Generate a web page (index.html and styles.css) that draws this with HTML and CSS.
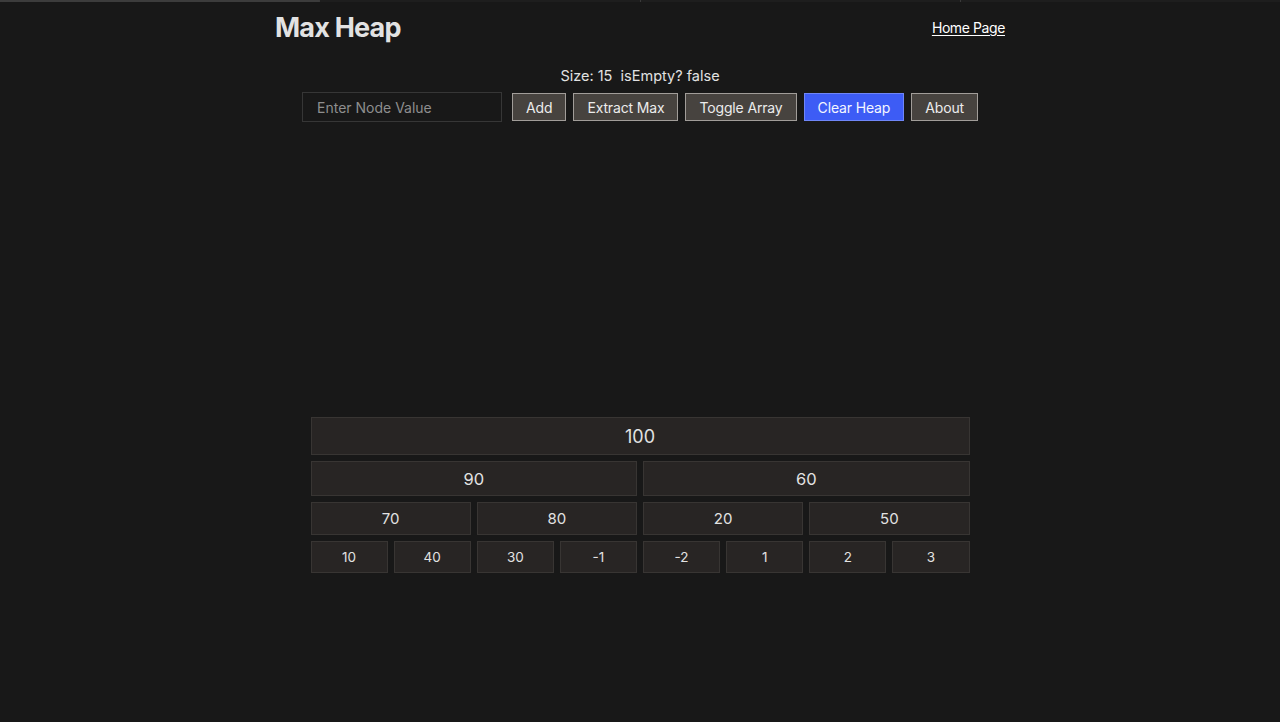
FILE: index.html
```html
<!DOCTYPE html>
<html lang="en">
<head>
<meta charset="utf-8">
<title>Max Heap</title>
<link rel="stylesheet" href="styles.css">
</head>
<body>
<div class="tabstrip">
  <span class="tab tab-active"></span><span class="tab"></span><span class="tab"></span><span class="tab"></span>
</div>
<header class="header">
  <h1 class="title">Max Heap</h1>
  <a class="home-link" href="#">Home Page</a>
</header>
<main class="main">
  <p class="status">Size: 15&nbsp; isEmpty? false</p>
  <div class="controls">
    <input class="node-input" type="text" placeholder="Enter Node Value">
    <button class="btn">Add</button>
    <button class="btn">Extract Max</button>
    <button class="btn">Toggle Array</button>
    <button class="btn btn-primary">Clear Heap</button>
    <button class="btn">About</button>
  </div>
  <div class="canvas"></div>
  <div class="heap">
    <div class="level level-0"><div class="node">100</div></div>
    <div class="level level-1"><div class="node">90</div><div class="node">60</div></div>
    <div class="level level-2"><div class="node">70</div><div class="node">80</div><div class="node">20</div><div class="node">50</div></div>
    <div class="level level-3"><div class="node">10</div><div class="node">40</div><div class="node">30</div><div class="node">-1</div><div class="node">-2</div><div class="node">1</div><div class="node">2</div><div class="node">3</div></div>
  </div>
</main>
</body>
</html>
```
FILE: styles.css
```css
* { box-sizing: border-box; }
html, body {
  margin: 0;
  padding: 0;
  background: #181818;
  color: #e2e2e2;
  font-family: Inter, "Noto Sans", "Liberation Sans", sans-serif;
  height: 100%;
}
.tabstrip {
  display: flex;
  height: 2px;
  background: #1e1e1e;
}
.tab {
  flex: 1;
  border-left: 1px solid #3a3a3a;
}
.tab:first-child { border-left: none; }
.tab-active { background: #3c3c3c; }

.header {
  width: 730px;
  margin: 0 auto;
  display: flex;
  justify-content: space-between;
  align-items: flex-start;
  padding-top: 10px;
  height: 54px;
}
.title {
  margin: 0;
  font-size: 27px;
  font-weight: 700;
  letter-spacing: -0.8px;
  color: #e2e2e2;
  line-height: 32px;
}
.home-link {
  margin-top: 7px;
  color: #ffffff;
  font-size: 14px;
  line-height: 17px;
  letter-spacing: -0.4px;
  text-decoration: underline;
  text-underline-offset: 2px;
}
.main {
  display: flex;
  flex-direction: column;
  align-items: center;
}
.status {
  margin: 11px 0 0;
  font-size: 14.5px;
  line-height: 18px;
  color: #e2e2e2;
}
.controls {
  display: flex;
  align-items: center;
  gap: 7px;
  margin-top: 7px;
}
.node-input {
  width: 200px;
  height: 30px;
  background: #181818;
  border: 1px solid #363636;
  color: #e2e2e2;
  font-family: inherit;
  font-size: 14px;
  padding: 0 14px;
  margin-right: 3px;
  outline: none;
}
.node-input::placeholder { color: #8e8e8e; }
.btn {
  height: 28px;
  padding: 0 13px;
  background: #47433f;
  border: 1px solid #a19d99;
  color: #ececec;
  font-family: inherit;
  font-size: 14px;
  letter-spacing: -0.15px;
  cursor: pointer;
}
.btn-primary {
  background: #3d5cf5;
  border-color: #6f86f7;
  color: #f4f6ff;
}
.canvas {
  height: 295px;
}
.heap {
  width: 659px;
  display: flex;
  flex-direction: column;
  gap: 6px;
}
.level {
  display: flex;
  gap: 6px;
}
.node {
  flex: 1;
  display: flex;
  align-items: center;
  justify-content: center;
  background: #282524;
  border: 1px solid #383533;
  color: #e2e2e2;
}
.level-0 .node { height: 38px; font-size: 18px; }
.level-1 .node { height: 35px; font-size: 16.5px; }
.level-2 .node { height: 33px; font-size: 15px; }
.level-3 .node { height: 32px; font-size: 13.5px; }
```
